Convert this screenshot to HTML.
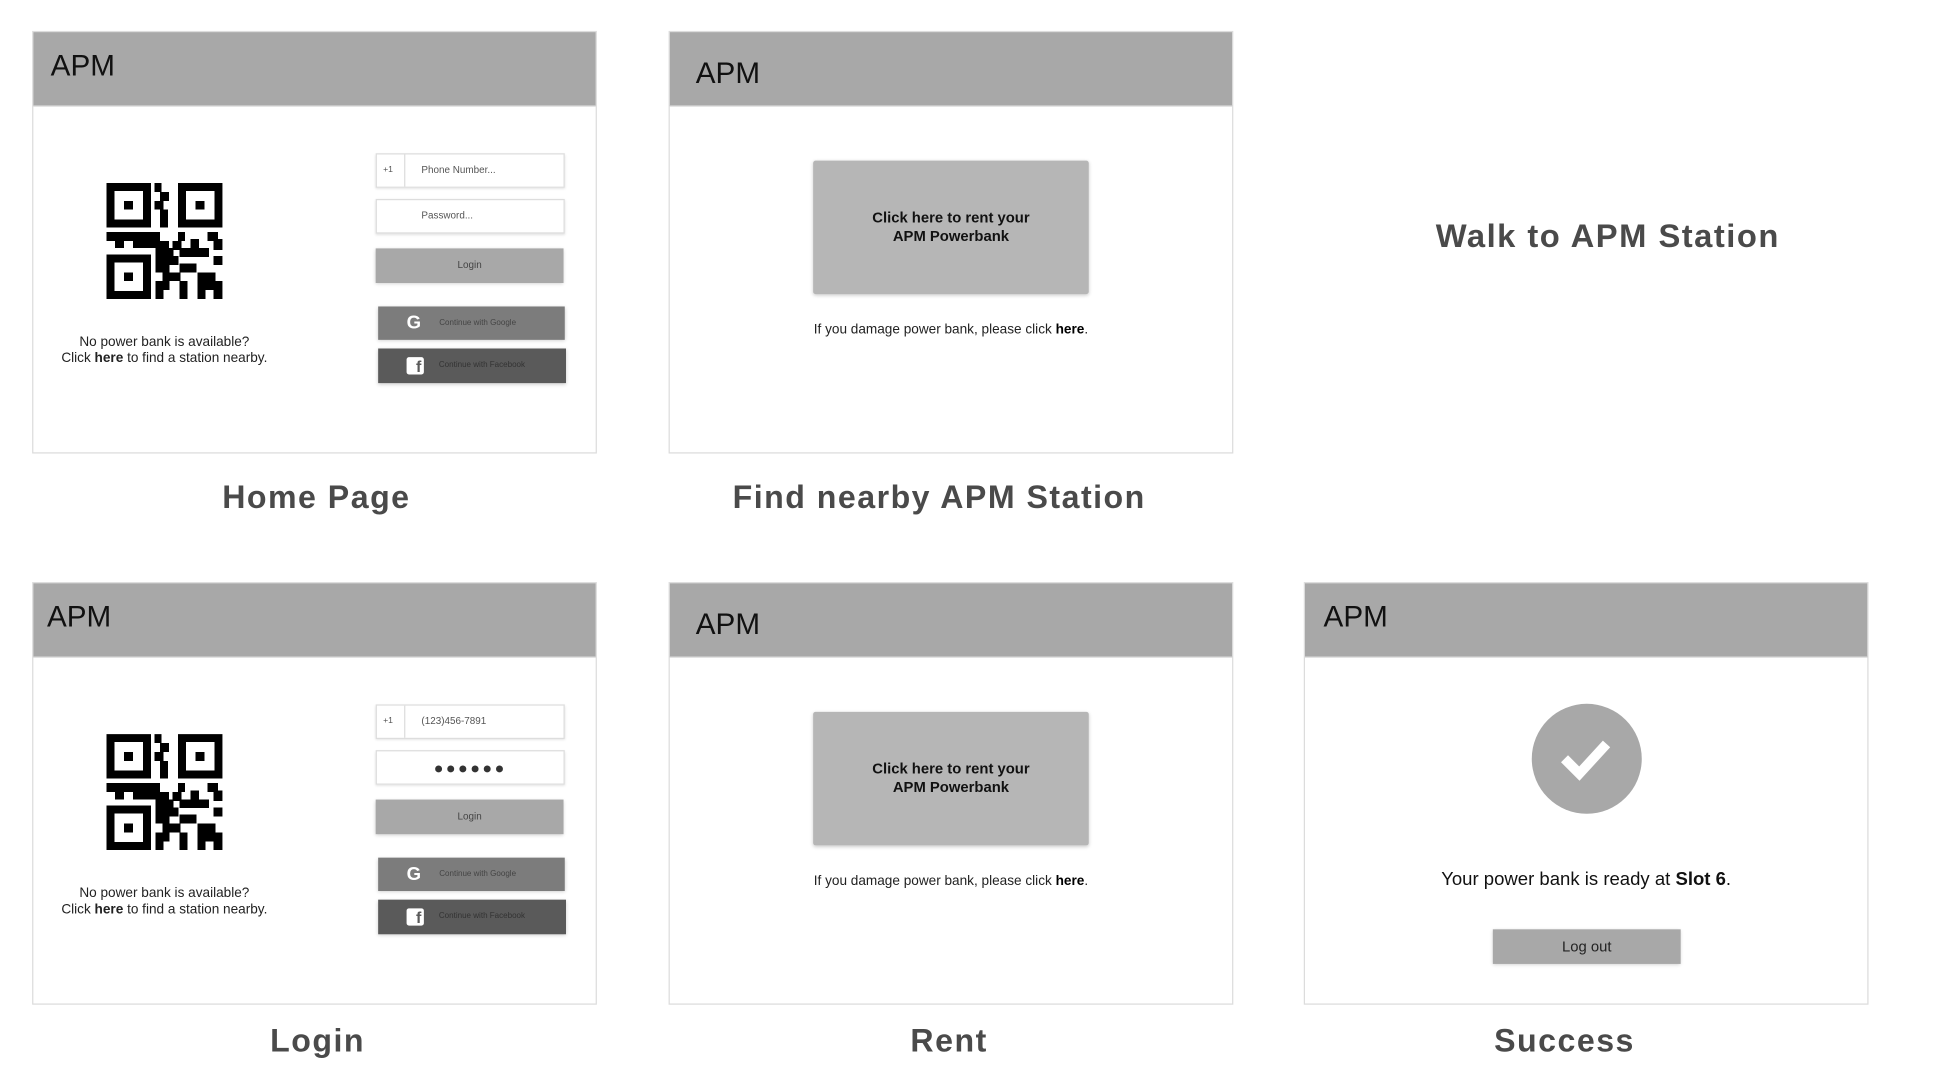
<!DOCTYPE html>
<html><head><meta charset="utf-8">
<style>
html,body{margin:0;padding:0;background:#fff;width:1938px;height:1082px;overflow:hidden}
#w{position:absolute;left:0;top:0;width:1548px;height:864px;transform:scale(1.2358);transform-origin:0 0;font-family:"Liberation Sans",Arial,sans-serif}
.card{position:absolute;width:457px;height:342px;border:1px solid #dcdcdc;box-sizing:border-box;background:#fff}
.hd{position:absolute;left:0;top:0;right:0;height:59px;background:#a8a8a8;border-bottom:1px solid #c8c8c8}
.hd span{position:absolute;left:14px;font-size:24px;color:#111;letter-spacing:0}
.lbl{position:absolute;font-weight:bold;font-size:26px;color:#4a4a4a;text-align:center;width:500px;margin-left:-250px;letter-spacing:1.2px}
.abs{position:absolute}
.inp{position:absolute;left:278px;width:153px;height:28px;background:#fff;border:1px solid #ddd;box-sizing:border-box;box-shadow:0 1px 2px rgba(0,0,0,.12);font-size:8px;color:#555}
.btn{position:absolute;box-sizing:border-box;box-shadow:0 1px 3px rgba(0,0,0,.2);font-size:8px;color:#444;text-align:center}
.small{position:absolute;font-size:11px;color:#222;text-align:center;line-height:13px}
</style></head><body><div id="w">

<div class="card" style="left:26px;top:25px">
 <div class="hd"><span style="top:14px">APM</span></div>
</div>
<div class="card" style="left:26px;top:471px">
 <div class="hd"><span style="top:14px;left:11px">APM</span></div>
</div>

<div class="abs" style="left:26px;top:25px;width:455px;height:340px">
 <svg class="abs" style="left:60px;top:123px" width="94" height="94" viewBox="0 0 13 13" shape-rendering="crispEdges">
  <g fill="#000">
   <path d="M0 0h5v5h-5zM0.9 0.9v3.2h3.2v-3.2z" fill-rule="evenodd"/><rect x="2" y="2" width="1" height="1"/>
   <path d="M8 0h5v5h-5zM8.9 0.9v3.2h3.2v-3.2z" fill-rule="evenodd"/><rect x="10" y="2" width="1" height="1"/>
   <path d="M0 8h5v5h-5zM0.9 8.9v3.2h3.2v-3.2z" fill-rule="evenodd"/><rect x="2" y="10" width="1" height="1"/>
   <rect x="5.4" y="0" width="0.8" height="1"/><rect x="6" y="1" width="1" height="1"/><rect x="5.4" y="2" width="1" height="1"/><rect x="6" y="3" width="0.9" height="2"/>
   <rect x="0" y="5.5" width="6" height="1"/><rect x="8" y="5.5" width="0.8" height="1"/><rect x="11.3" y="5.5" width="1.2" height="1"/>
   <rect x="1" y="6.5" width="1" height="0.8"/><rect x="3" y="6.5" width="4" height="0.8"/><rect x="7.4" y="6.5" width="1" height="1"/><rect x="9.4" y="6.3" width="1" height="1"/><rect x="12" y="6.3" width="1" height="1.2"/>
   <rect x="5.5" y="7.3" width="2" height="1"/><rect x="8.2" y="7.3" width="3.3" height="1"/>
   <rect x="5.5" y="8.2" width="2.6" height="1"/><rect x="12" y="8.2" width="1" height="1"/>
   <rect x="5.5" y="9" width="1.6" height="1"/><rect x="8.2" y="9" width="1.9" height="1"/>
   <rect x="6.3" y="10" width="2" height="1"/><rect x="10.2" y="10" width="2" height="1"/>
   <rect x="5.5" y="11" width="1.6" height="1"/><rect x="8.2" y="11" width="0.9" height="2"/><rect x="10.2" y="11" width="2.8" height="1"/>
   <rect x="5.5" y="12" width="0.9" height="1"/><rect x="10.2" y="12" width="0.9" height="1"/><rect x="12" y="12" width="1" height="1"/>
  </g>
 </svg>
 <div class="small" style="left:0;width:214px;top:246px">No power bank is available?<br>Click <b>here</b> to find a station nearby.</div>
 <div class="inp" style="top:99px"><span class="abs" style="left:5px;top:9px;font-size:7px">+1</span><div class="abs" style="left:22px;top:0;bottom:0;border-left:1px solid #ddd"></div><span class="abs" style="left:36px;top:8px">Phone Number...</span></div>
 <div class="inp" style="top:136px"><span class="abs" style="left:36px;top:8px">Password...</span></div>
 <div class="btn" style="left:278px;top:176px;width:152px;height:28px;background:#a8a8a8;line-height:28px">Login</div>
 <div class="btn" style="left:280px;top:223px;width:151px;height:27px;background:#7c7c7c;color:#444;font-size:6.5px;line-height:27px"><span class="abs" style="left:23px;top:0;font-size:15px;font-weight:bold;color:#fff;line-height:27px">G</span><span style="padding-left:10px">Continue with Google</span></div>
 <div class="btn" style="left:280px;top:257px;width:152px;height:28px;background:#5a5a5a;color:#333;font-size:6.5px;line-height:28px"><span class="abs" style="left:23px;top:7px;width:14px;height:14px;background:#fff;border-radius:2px;color:#5a5a5a;font-weight:bold;font-size:13px;line-height:16px;text-align:right;box-sizing:border-box;padding-right:2px">f</span><span style="padding-left:16px">Continue with Facebook</span></div>
</div>

<div class="abs" style="left:26px;top:471px;width:455px;height:340px">
 <svg class="abs" style="left:60px;top:123px" width="94" height="94" viewBox="0 0 13 13" shape-rendering="crispEdges">
  <g fill="#000">
   <path d="M0 0h5v5h-5zM0.9 0.9v3.2h3.2v-3.2z" fill-rule="evenodd"/><rect x="2" y="2" width="1" height="1"/>
   <path d="M8 0h5v5h-5zM8.9 0.9v3.2h3.2v-3.2z" fill-rule="evenodd"/><rect x="10" y="2" width="1" height="1"/>
   <path d="M0 8h5v5h-5zM0.9 8.9v3.2h3.2v-3.2z" fill-rule="evenodd"/><rect x="2" y="10" width="1" height="1"/>
   <rect x="5.4" y="0" width="0.8" height="1"/><rect x="6" y="1" width="1" height="1"/><rect x="5.4" y="2" width="1" height="1"/><rect x="6" y="3" width="0.9" height="2"/>
   <rect x="0" y="5.5" width="6" height="1"/><rect x="8" y="5.5" width="0.8" height="1"/><rect x="11.3" y="5.5" width="1.2" height="1"/>
   <rect x="1" y="6.5" width="1" height="0.8"/><rect x="3" y="6.5" width="4" height="0.8"/><rect x="7.4" y="6.5" width="1" height="1"/><rect x="9.4" y="6.3" width="1" height="1"/><rect x="12" y="6.3" width="1" height="1.2"/>
   <rect x="5.5" y="7.3" width="2" height="1"/><rect x="8.2" y="7.3" width="3.3" height="1"/>
   <rect x="5.5" y="8.2" width="2.6" height="1"/><rect x="12" y="8.2" width="1" height="1"/>
   <rect x="5.5" y="9" width="1.6" height="1"/><rect x="8.2" y="9" width="1.9" height="1"/>
   <rect x="6.3" y="10" width="2" height="1"/><rect x="10.2" y="10" width="2" height="1"/>
   <rect x="5.5" y="11" width="1.6" height="1"/><rect x="8.2" y="11" width="0.9" height="2"/><rect x="10.2" y="11" width="2.8" height="1"/>
   <rect x="5.5" y="12" width="0.9" height="1"/><rect x="10.2" y="12" width="0.9" height="1"/><rect x="12" y="12" width="1" height="1"/>
  </g>
 </svg>
 <div class="small" style="left:0;width:214px;top:246px">No power bank is available?<br>Click <b>here</b> to find a station nearby.</div>
 <div class="inp" style="top:99px"><span class="abs" style="left:5px;top:9px;font-size:7px">+1</span><div class="abs" style="left:22px;top:0;bottom:0;border-left:1px solid #ddd"></div><span class="abs" style="left:36px;top:8px">(123)456-7891</span></div>
 <div class="inp" style="top:136px;text-align:center;font-size:13px;color:#333;line-height:28px;letter-spacing:2px">●●●●●●</div>
 <div class="btn" style="left:278px;top:176px;width:152px;height:28px;background:#a8a8a8;line-height:28px">Login</div>
 <div class="btn" style="left:280px;top:223px;width:151px;height:27px;background:#7c7c7c;color:#444;font-size:6.5px;line-height:27px"><span class="abs" style="left:23px;top:0;font-size:15px;font-weight:bold;color:#fff;line-height:27px">G</span><span style="padding-left:10px">Continue with Google</span></div>
 <div class="btn" style="left:280px;top:257px;width:152px;height:28px;background:#5a5a5a;color:#333;font-size:6.5px;line-height:28px"><span class="abs" style="left:23px;top:7px;width:14px;height:14px;background:#fff;border-radius:2px;color:#5a5a5a;font-weight:bold;font-size:13px;line-height:16px;text-align:right;box-sizing:border-box;padding-right:2px">f</span><span style="padding-left:16px">Continue with Facebook</span></div>
</div>

<div class="card" style="left:541px;top:25px">
 <div class="hd"><span style="top:20px;left:21px">APM</span></div>
 <div class="btn" style="left:116px;top:104px;width:223px;height:108px;background:#b6b6b6;border-radius:2px;font-size:12px;font-weight:bold;color:#111;line-height:15px;padding-top:39px">Click here to rent your<br>APM Powerbank</div>
 <div class="small" style="left:0;width:455px;top:235px;color:#222">If you damage power bank, please click <b style="color:#000">here</b>.</div>
</div>
<div class="card" style="left:541px;top:471px">
 <div class="hd"><span style="top:20px;left:21px">APM</span></div>
 <div class="btn" style="left:116px;top:104px;width:223px;height:108px;background:#b6b6b6;border-radius:2px;font-size:12px;font-weight:bold;color:#111;line-height:15px;padding-top:39px">Click here to rent your<br>APM Powerbank</div>
 <div class="small" style="left:0;width:455px;top:235px;color:#222">If you damage power bank, please click <b style="color:#000">here</b>.</div>
</div>

<div class="card" style="left:1055px;top:471px">
 <div class="hd"><span style="top:14px;left:15px">APM</span></div>
 <svg class="abs" style="left:183px;top:97px" width="90" height="90" viewBox="0 0 90 90">
  <circle cx="45" cy="45" r="44.5" fill="#a8a8a8"/>
  <path d="M27 45 L39 57 L61 33" fill="none" stroke="#fff" stroke-width="8"/>
 </svg>
 <div class="abs" style="left:0;width:455px;top:231px;text-align:center;font-size:15px;color:#111">Your power bank is ready at <b>Slot 6</b>.</div>
 <div class="btn" style="left:152px;top:280px;width:152px;height:28px;background:#a8a8a8;font-size:12px;color:#222;line-height:28px">Log out</div>
</div>

<div class="lbl" style="left:1301px;top:176px;font-size:26.5px">Walk to APM Station</div>
<div class="lbl" style="left:256px;top:387px">Home Page</div>
<div class="lbl" style="left:760px;top:387px">Find nearby APM Station</div>
<div class="lbl" style="left:257px;top:827px">Login</div>
<div class="lbl" style="left:768px;top:827px">Rent</div>
<div class="lbl" style="left:1266px;top:827px">Success</div>

</div></body></html>
